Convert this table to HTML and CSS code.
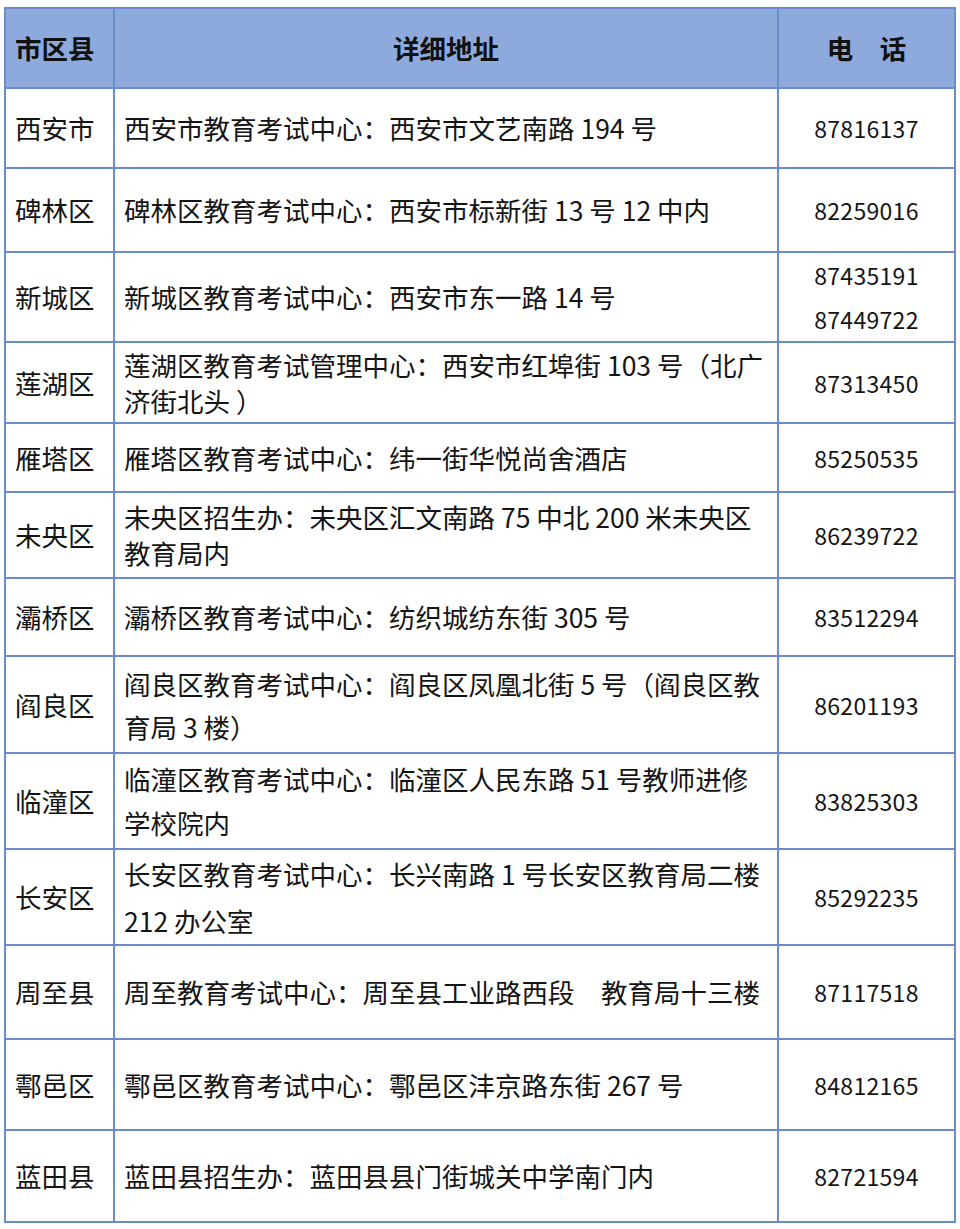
FILE: index.html
```html
<!DOCTYPE html>
<html lang="zh-CN">
<head>
<meta charset="utf-8">
<title>西安市教育考试中心地址电话</title>
<link rel="stylesheet" href="styles.css">
</head>
<body>
<table class="tbl">
  <colgroup>
    <col class="c1">
    <col class="c2">
    <col class="c3">
  </colgroup>
  <thead>
    <tr class="head">
      <th class="area">市区县</th>
      <th class="addr-h">详细地址</th>
      <th class="tel-h">电　话</th>
    </tr>
  </thead>
  <tbody>
    <tr class="r1"><td class="area">西安市</td><td class="addr">西安市教育考试中心：西安市文艺南路 194 号</td><td class="tel">87816137</td></tr>
    <tr class="r2"><td class="area">碑林区</td><td class="addr">碑林区教育考试中心：西安市标新街 13 号 12 中内</td><td class="tel">82259016</td></tr>
    <tr class="r3"><td class="area">新城区</td><td class="addr">新城区教育考试中心：西安市东一路 14 号</td><td class="tel tel2">87435191<br>87449722</td></tr>
    <tr class="r4"><td class="area">莲湖区</td><td class="addr">莲湖区教育考试管理中心：西安市红埠街 103 号（北广<br>济街北头 ）</td><td class="tel">87313450</td></tr>
    <tr class="r5"><td class="area">雁塔区</td><td class="addr">雁塔区教育考试中心：纬一街华悦尚舍酒店</td><td class="tel">85250535</td></tr>
    <tr class="r6"><td class="area">未央区</td><td class="addr">未央区招生办：未央区汇文南路 75 中北 200 米未央区<br>教育局内</td><td class="tel">86239722</td></tr>
    <tr class="r7"><td class="area">灞桥区</td><td class="addr">灞桥区教育考试中心：纺织城纺东街 305 号</td><td class="tel">83512294</td></tr>
    <tr class="r8"><td class="area">阎良区</td><td class="addr">阎良区教育考试中心：阎良区凤凰北街 5 号（阎良区教<br>育局 3 楼）</td><td class="tel">86201193</td></tr>
    <tr class="r9"><td class="area">临潼区</td><td class="addr">临潼区教育考试中心：临潼区人民东路 51 号教师进修<br>学校院内</td><td class="tel">83825303</td></tr>
    <tr class="r10"><td class="area">长安区</td><td class="addr">长安区教育考试中心：长兴南路 1 号长安区教育局二楼<br>212 办公室</td><td class="tel">85292235</td></tr>
    <tr class="r11"><td class="area">周至县</td><td class="addr">周至教育考试中心：周至县工业路西段　教育局十三楼</td><td class="tel">87117518</td></tr>
    <tr class="r12"><td class="area">鄠邑区</td><td class="addr">鄠邑区教育考试中心：鄠邑区沣京路东街 267 号</td><td class="tel">84812165</td></tr>
    <tr class="r13"><td class="area">蓝田县</td><td class="addr">蓝田县招生办：蓝田县县门街城关中学南门内</td><td class="tel">82721594</td></tr>
  </tbody>
</table>
</body>
</html>
```

FILE: styles.css
```css
html, body {
  margin: 0;
  padding: 0;
  background: #ffffff;
}

body {
  padding: 7px 0 0 4px;
  font-family: "Noto Sans CJK SC", "Noto Sans", sans-serif;
  color: #141414;
}

.tbl {
  border-collapse: collapse;
  table-layout: fixed;
  width: 950px;
}

.c1 { width: 109px; }
.c2 { width: 664px; }
.c3 { width: 177px; }

.tbl th,
.tbl td {
  border: 2px solid #6a8ccb;
  padding: 0;
  vertical-align: middle;
  white-space: nowrap;
  font-size: 26.5px;
  line-height: 36px;
}

.head {
  height: 80px;
  background: #8eaadc;
}

.head th {
  font-weight: 700;
  color: #111;
}

.head .area {
  text-align: left;
  padding-left: 9px;
}

.addr-h,
.tel-h {
  text-align: center;
}

.area {
  text-align: left;
  padding-left: 9px;
}

.tbl td.area {
  padding-left: 9px;
}

.tbl td.addr {
  padding-left: 9px;
}

.tbl td.tel {
  text-align: center;
  font-size: 23px;
  letter-spacing: 0.3px;
}

.tbl td.tel2 {
  line-height: 44px;
}

.r1 { height: 80px; }
.r2 { height: 84px; }
.r3 { height: 90px; }
.r4 { height: 81px; }
.r5 { height: 69px; }
.r6 { height: 86px; }
.r7 { height: 78px; }
.r8 { height: 97px; }
.r9 { height: 96px; }
.r10 { height: 95px; }
.r11 { height: 94px; }
.r12 { height: 91px; }
.r13 { height: 92px; }

.r8 td.addr { line-height: 43px; }
.r9 td.addr { line-height: 44px; }
.r10 td.addr { line-height: 47px; }
```
